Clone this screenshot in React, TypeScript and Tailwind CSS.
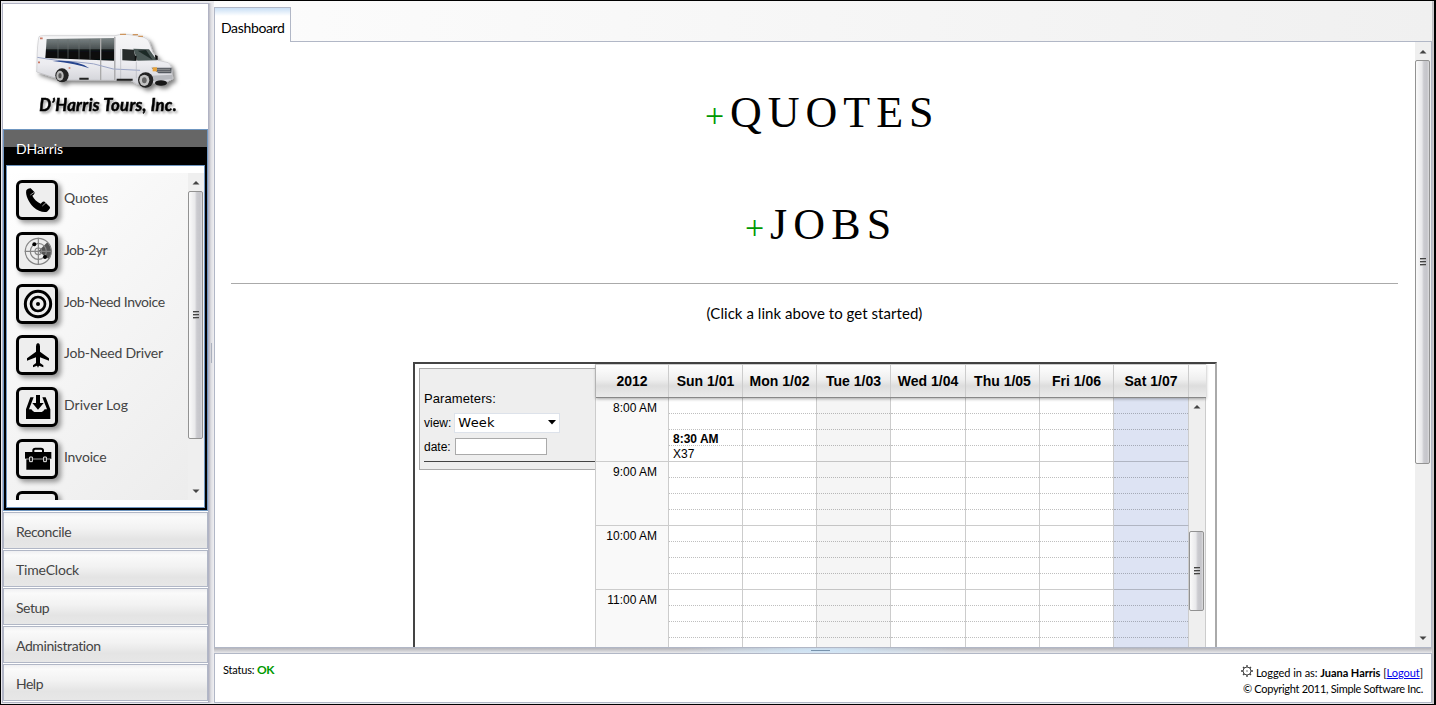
import React from "react";

const menu = [
  { label: "Quotes", icon: "phone", track: "tracking-[-0.15px]" },
  { label: "Job-2yr", icon: "radar", track: "tracking-[-0.6px]" },
  { label: "Job-Need Invoice", icon: "target", track: "tracking-[-0.4px]" },
  { label: "Job-Need Driver", icon: "plane", track: "tracking-[-0.2px]" },
  { label: "Driver Log", icon: "inbox", track: "tracking-[0.05px]" },
  { label: "Invoice", icon: "case", track: "tracking-[-0.2px]" },
  { label: "", icon: "none", track: "" },
];

const sections = [
  { label: "Reconcile", track: "tracking-[-0.4px]" },
  { label: "TimeClock", track: "tracking-[-0.2px]" },
  { label: "Setup", track: "tracking-[-0.5px]" },
  { label: "Administration", track: "tracking-[-0.4px]" },
  { label: "Help", track: "tracking-[-0.5px]" },
];
const hours = ["8:00 AM", "9:00 AM", "10:00 AM", "11:00 AM"];
const days = [
  { name: "Sun 1/01", cell: "bg-white" },
  { name: "Mon 1/02", cell: "bg-white" },
  { name: "Tue 1/03", cell: "bg-[#f5f5f5]" },
  { name: "Wed 1/04", cell: "bg-white" },
  { name: "Thu 1/05", cell: "bg-white" },
  { name: "Fri 1/06", cell: "bg-white" },
  { name: "Sat 1/07", cell: "bg-[#dde3f3]" },
];
const gridCols = "grid grid-cols-[73px_74px_74px_74px_75px_74px_74px_75px]";

function MenuIcon({ kind }: { kind: string }) {
  return (
    <svg viewBox="0 0 108 102" className="h-[34px] w-[36px]">
      {kind === "phone" && (
        <g>
          <path d="M22 22 C25 18 31 15 35 16 L47 28 Q48 31 44 35 L40 38 C45 48 54 57 65 62 L70 57 Q73 54 77 56 L93 72 Q94 76 89 81 L84 86 C75 90 57 85 43 72 C30 59 18 36 22 22Z" fill="#000" />
          <path d="M34 36l13-9M70 69l12-11" stroke="#eee" strokeWidth="2" />
        </g>
      )}
      {kind === "radar" && (
        <g fill="none" stroke="#858585" strokeWidth="3.5">
          <path d="M58 49L85 22A40 40 0 0 1 90 73Z" fill="#555" stroke="none" />
          <circle cx="58" cy="49" r="39" />
          <circle cx="58" cy="49" r="24" />
          <circle cx="58" cy="49" r="10" />
          <path d="M17 49h82M58 8v82" />
          <circle cx="46" cy="28" r="6" fill="#000" stroke="none" />
          <circle cx="78" cy="66" r="6" fill="#000" stroke="none" />
        </g>
      )}
      {kind === "target" && (
        <g fill="none" stroke="#000">
          <circle cx="57" cy="51" r="38" strokeWidth="9" />
          <circle cx="57" cy="51" r="21" strokeWidth="8" />
          <circle cx="57" cy="51" r="6" fill="#000" stroke="none" />
        </g>
      )}
      {kind === "plane" && (
        <path d="M57 15Q63 16 63 25V41L90 61V68L63 58V75L73 82V88L60 83L57 89L54 83L42 88V82L51 75V58L24 68V61L51 41V25Q51 16 57 15Z" />
      )}
      {kind === "inbox" && (
        <g>
          <path d="M21 58L34 22H44L30 58H37Q43 66 46 66H68Q72 66 77 58H84L70 22H80L94 58V87H21Z" />
          <path d="M51 15H63V39H74L57 59L40 39H51Z" />
        </g>
      )}
      {kind === "case" && (
        <g>
          <path d="M43 30V25Q43 20 49 20H66Q72 20 72 25V30" fill="none" stroke="#000" strokeWidth="6" />
          <path d="M18 30H97V51H93V83H22V51H18Z" />
          <path d="M18 51H97" stroke="#eee" strokeWidth="2" />
          <path d="M32 45h8v14h-8zM74 45h8v14h-8z" fill="#000" stroke="#eee" strokeWidth="3" />
        </g>
      )}
    </svg>
  );
}

function Logo() {
  return (
    <svg viewBox="9 12 612 375" className="block h-[125px] w-[204px]">
      <defs>
        <linearGradient id="body" x1="0" y1="0" x2="0" y2="1">
          <stop offset="0" stopColor="#f6f6f7" />
          <stop offset=".6" stopColor="#ececf0" />
          <stop offset="1" stopColor="#d0d1d6" />
        </linearGradient>
        <linearGradient id="glass" x1="0" y1="0" x2="0" y2="1">
          <stop offset="0" stopColor="#7a8384" />
          <stop offset=".48" stopColor="#4a5152" />
          <stop offset=".52" stopColor="#101314" />
          <stop offset="1" stopColor="#050606" />
        </linearGradient>
        <filter id="shade" x="-10%" y="-10%" width="125%" height="135%">
          <feDropShadow dx="9" dy="9" stdDeviation="6" floodColor="#000" floodOpacity=".5" />
        </filter>
        <filter id="soft" x="-10%" y="-10%" width="120%" height="150%">
          <feDropShadow dx="5" dy="6" stdDeviation="3" floodColor="#000" floodOpacity=".35" />
        </filter>
      </defs>
      <g filter="url(#shade)">
        <path d="M117 110Q120 107 130 107L345 107L358 104Q380 100 432 112Q446 116 449 130L458 156L474 181L505 188Q515 195 516 222L519 236L500 246L410 252L392 241L205 240L160 232L110 216L111 180Q112 130 117 110Z" fill="url(#body)" stroke="#b6b7bb" strokeWidth="1.5" />
        <path d="M140 117L345 114L344 182L136 174Z" fill="url(#glass)" />
        <path d="M174 117v58M204 117v59M237 117v60M270 117v61" stroke="#697071" strokeWidth="2" />
        <path d="M302 114V240M344 110V240" stroke="#aaa" strokeWidth="4" fill="none" />
        <path d="M367 147L402 149L408 183L367 181Z" fill="#262c2c" />
        <path d="M400 146L447 148L471 181L412 182Z" fill="#4c5857" />
        <path d="M413 152L438 150L458 180Z" fill="#1f2928" />
        <path d="M112 172Q180 184 222 185Q280 187 340 207L420 211" fill="none" stroke="#9aa4c5" strokeWidth="3" />
        <path d="M158 183Q235 179 268 205Q232 192 158 183Z" fill="#26448e" />
        <path d="M345 111V240M362 147V240M409 185V235" stroke="#b5b6bd" strokeWidth="2" />
        <path d="M350 239h48M238 236h28" stroke="#222" strokeWidth="6" />
        <path d="M454 203L515 203L514 220L476 220Z" fill="#555a60" />
        <path d="M458 202h13v12h-13z" fill="#e9a33b" />
        <path d="M453 227L516 224L518 237L457 243Z" fill="#b7b9be" />
        <path d="M470 208h40M472 214h40" stroke="#aaa" strokeWidth="2" />
        <ellipse cx="483" cy="249" rx="18" ry="8" fill="#151515" />
        <ellipse cx="186" cy="226" rx="20" ry="21" fill="#202020" />
        <ellipse cx="180" cy="227" rx="11" ry="15" fill="#b9b9b9" />
        <ellipse cx="180" cy="227" rx="5" ry="8" fill="#555" />
        <ellipse cx="437" cy="240" rx="23" ry="23" fill="#202020" />
        <ellipse cx="433" cy="241" rx="15" ry="17" fill="#c2c2c2" />
        <ellipse cx="433" cy="241" rx="7" ry="9" fill="#666" />
        <path d="M465 164l8 4v13l-7-3zM404 166l6 3v13l-6-3z" fill="#111" />
        <path d="M360 103h18M398 104h16M415 109h14" stroke="#ce965e" strokeWidth="4" />
        <path d="M120 115h8M114 187h6M206 204h5" stroke="#cb7964" strokeWidth="5" />
      </g>
      <text x="118" y="333" textLength="412" lengthAdjust="spacing" filter="url(#soft)" className="fill-black font-['Lato'] text-[50px] font-bold italic" stroke="#000" strokeWidth="1.5">
        D’Harris Tours, Inc.
      </text>
    </svg>
  );
}

function Arrow({ up = false }: { up?: boolean }) {
  return (
    <svg viewBox="0 0 8 5" className="block h-[5px] w-[8px]">
      <path d={up ? "M0.5 4.5L4 1L7.5 4.5Z" : "M0.5 0.5H7.5L4 4Z"} fill="#444" />
    </svg>
  );
}

function Thumb({ size }: { size: string }) {
  return (
    <div className={`${size} mr-px flex w-[15px] shrink-0 items-center justify-center rounded-[2px] border border-[#929292] bg-[linear-gradient(90deg,#fafafa,#e9e9eb_45%,#cbcbd0_60%,#c5c5ca_85%,#dddddf)]`}>
      <div className="flex w-[6px] flex-col gap-px">
        <i className="h-[2px] border-b border-[#aaa] bg-[#444]" />
        <i className="h-[2px] border-b border-[#aaa] bg-[#444]" />
        <i className="h-[2px] border-b border-[#aaa] bg-[#444]" />
      </div>
    </div>
  );
}

function Sidebar() {
  return (
    <aside className="flex h-[700px] w-[207px] shrink-0 flex-col border border-[#b1b3c4] bg-white">
      <div className="h-[125px] shrink-0"><Logo /></div>
      <section className="h-[382px] shrink-0 border border-[#6f96c0] bg-black">
        <h2 className="h-[35px] bg-[linear-gradient(#666_0_17px,#000_17px)] pl-[12px] pt-[9px] text-[14px] leading-[20px] tracking-[-0.1px] text-white">DHarris</h2>
        <div className="mx-[2px] h-[343px] border border-[#6f96c0] bg-white pt-[7px]">
          <div className="flex h-[327px] overflow-hidden bg-[linear-gradient(135deg,#fff,#f8f8f8_30%,#ececec)]">
            <div className="flex-1 pl-[9px] pt-[7px]">
              {menu.map((m) => (
                <div key={m.icon} className="mb-[11.8px] flex h-[40px] gap-[6px]">
                  <span className="block h-[40px] w-[42px] shrink-0 rounded-[6px] border-3 border-black bg-[#eee] shadow-[3px_3px_5px_#0006]">
                    <MenuIcon kind={m.icon} />
                  </span>
                  <span className={`${m.track} whitespace-nowrap pt-[8px] text-[14px] leading-[20px] text-[#444]`}>{m.label}</span>
                </div>
              ))}
            </div>
            <div className="flex w-[16px] flex-col items-center bg-[#efefef]">
              <div className="flex h-[18px] shrink-0 items-center"><Arrow up /></div>
              <Thumb size="h-[248px]" />
              <div className="mt-auto flex h-[17px] items-center"><Arrow /></div>
            </div>
          </div>
        </div>
      </section>
      <nav className="flex flex-col gap-px pt-px">
        {sections.map((s) => (
          <div key={s.label} className={`${s.track} h-[37px] border border-[#b1b7c6] bg-[linear-gradient(#f0f0f2,#fafafa_12%,#f2f2f2_45%,#e4e4e4_75%,#e7e7e7)] pl-[12px] pt-[9px] text-[14px] leading-[20px] text-[#444]`}>{s.label}</div>
        ))}
      </nav>
    </aside>
  );
}

function Calendar() {
  return (
    <div className="w-[612px] shrink-0 border-l border-[#ccc]">
      <div className="relative z-10 flex h-[34px] w-[610px] border-b border-[#888] border-t border-t-[#ccc] bg-[linear-gradient(#fff,#efefef_45%,#ddd_65%,#ebebeb)] shadow-[0_1px_3px_#0005]">
        <div className={`${gridCols} w-[593px] shrink-0 text-center text-[14px] font-bold leading-[32px]`}>
          <b className="border-r border-[#ccc]">2012</b>
          {days.map((d) => (
            <b key={d.name} className="whitespace-nowrap border-r border-[#ccc]">{d.name}</b>
          ))}
        </div>
      </div>
      <div className="flex">
        <div className="w-[593px] shrink-0">
          {hours.map((h, hi) => (
            <div key={h} className={`${gridCols} h-[64px]`}>
              <div className="border-b border-r border-[#ccc] bg-[#f9f9f9] pr-[11px] pt-[2px] text-right text-[12px] leading-[16px]">{h}</div>
              {days.map((d, di) => (
                <div key={d.name} className={`${d.cell} relative border-b border-r border-b-black/20 border-r-[#ccc]`}>
                  <div className="h-[16px] border-b border-dotted border-black/25" />
                  <div className="h-[16px] border-b border-dotted border-black/25" />
                  <div className="h-[16px] border-b border-dotted border-black/25" />
                  {hi === 0 && di === 0 && (
                    <div className="absolute left-[4px] top-[34px] whitespace-nowrap text-[12px] leading-[15px]">
                      <b>8:30 AM</b>
                      <div>X37</div>
                    </div>
                  )}
                </div>
              ))}
            </div>
          ))}
        </div>
        <div className="flex w-[17px] flex-col items-center border-r border-[#ccc] bg-[#efefef]">
          <div className="flex h-[133px] shrink-0 items-start pt-[6px]"><Arrow up /></div>
          <Thumb size="h-[80px]" />
        </div>
      </div>
    </div>
  );
}

function Content() {
  return (
    <div className="flex h-[606px] border-x border-b border-[#b1b7c6] bg-white">
      <div className="flex w-[1200px] shrink-0 flex-col overflow-hidden pl-[16px]">
        <h1 className="flex h-[112px] shrink-0 items-baseline pl-[474px] pt-[46px] font-['Liberation_Serif',serif] text-[44px] leading-[50px] tracking-[6px]">
          <span className="w-[25px] text-[34px] tracking-normal text-[#090]">+</span>QUOTES
        </h1>
        <h1 className="flex h-[112px] shrink-0 items-baseline pl-[514px] pt-[46px] font-['Liberation_Serif',serif] text-[44px] leading-[50px] tracking-[6.2px]">
          <span className="w-[25px] text-[34px] tracking-normal text-[#090]">+</span>JOBS
        </h1>
        <hr className="mt-[17px] w-[1167px] shrink-0 border-t border-[#aaa]" />
        <p className="w-[1167px] shrink-0 pt-[19px] text-center text-[15px] leading-[20px] tracking-[0.05px]">(Click a link above to get started)</p>
        <div className="ml-[182px] mt-[39px] flex h-[320px] w-[804px] shrink-0 border-2 border-[#444] border-r-[#aaa] font-['Liberation_Sans',sans-serif]">
          <div className="w-[180px] shrink-0 pl-[4px] pt-[4px]">
            <div className="h-[102px] border border-r-0 border-[#aaa] bg-[#eee] pl-[4px] pt-[20px] text-[12px]">
              <div className="h-[22px] text-[13px] leading-[20px] tracking-[0.1px]">Parameters:</div>
              <div className="flex h-[23px] items-center gap-[3px]">
                view:
                <span className="flex h-[20px] w-[106px] shrink-0 items-center justify-between border border-[#dde2ea] bg-white pl-[3px] pr-[3px] font-['DejaVu_Sans',sans-serif] text-[13px] tracking-[0.2px]">
                  Week
                  <svg viewBox="0 0 8 5" className="h-[5px] w-[8px]"><path d="M0 0H8L4 4.5Z" /></svg>
                </span>
              </div>
              <div className="flex h-[25px] items-center gap-[4px]">
                date:<span className="h-[17px] w-[92px] border border-[#aaa] bg-white" />
              </div>
              <div className="mt-[2px] border-t border-[#444]" />
            </div>
          </div>
          <Calendar />
        </div>
      </div>
      <div className="ml-auto flex w-[17px] flex-col items-center bg-[#efefef]">
        <div className="flex h-[18px] shrink-0 items-center"><Arrow up /></div>
        <Thumb size="h-[404px]" />
        <div className="mt-auto flex h-[17px] items-center"><Arrow /></div>
      </div>
    </div>
  );
}

function Gear() {
  return (
    <svg viewBox="0 0 36 36" className="h-[12px] w-[12px]" fill="none" stroke="#444">
      <circle cx="18" cy="18" r="12" strokeWidth="3" />
      <path d="M18 0v6M18 30v6M0 18h6M30 18h6M6 6l4 4M26 26l4 4M30 6l-4 4M10 26l-4 4" strokeWidth="4" />
      <circle cx="18" cy="18" r="2" fill="#444" stroke="none" />
    </svg>
  );
}

export default function App() {
  return (
    <div className="flex h-[705px] w-[1436px] overflow-hidden border border-r-2 border-black bg-[#e9e9ed] pl-px pt-[2px] font-['Lato',sans-serif] text-black">
      <Sidebar />
      <div className="flex h-[700px] w-[5px] shrink-0 items-center bg-[linear-gradient(90deg,#b8b8c2,#dedee2_40%,#f0f0f3)] pl-[2px]">
        <i className="h-[20px] w-px bg-[#aab0bd]" />
      </div>
      <main className="-mt-[2px] flex w-[1218px] shrink-0 flex-col shadow-[2px_0_2px_#0003]">
        <div className="flex h-[41px] shrink-0 bg-[linear-gradient(90deg,#fcfcfc,#f0f0f0)] pt-[6px]">
          <div className="h-[35px] w-[77px] border border-b-0 border-[#b1b7c6] bg-[linear-gradient(#c9dff5,#fff_8px)] pl-[6px] pt-[10px] text-[14px] leading-[20px] tracking-[-0.35px]">Dashboard</div>
          <div className="flex-1 border-b border-[#b1b7c6]" />
        </div>
        <Content />
        <div className="flex h-[5px] shrink-0 items-center justify-center bg-[radial-gradient(ellipse_140px_9px_at_center,#cfe5f7,transparent),linear-gradient(#b4b4ba,#e8e8ea)] pr-[6px]">
          <i className="h-px w-[19px] bg-[#7893ad]" />
        </div>
        <footer className="flex h-[50px] shrink-0 justify-between border border-[#b1b7c6] bg-white pl-[8px] pr-[8px] text-[11px] leading-[16px]">
          <p className="pt-[8px] tracking-[-0.2px]">Status: <b className="text-[12px] text-[#090]">OK</b></p>
          <div className="flex flex-col items-end pt-[11px]">
            <p className="flex h-[16px] gap-[3px] tracking-[-0.04px]"><Gear /><span>Logged in as: <b>Juana Harris</b> [<a className="text-[#00e] underline">Logout</a>]</span></p>
            <p className="tracking-[-0.3px]">© Copyright 2011, Simple Software Inc.</p>
          </div>
        </footer>
      </main>
    </div>
  );
}
